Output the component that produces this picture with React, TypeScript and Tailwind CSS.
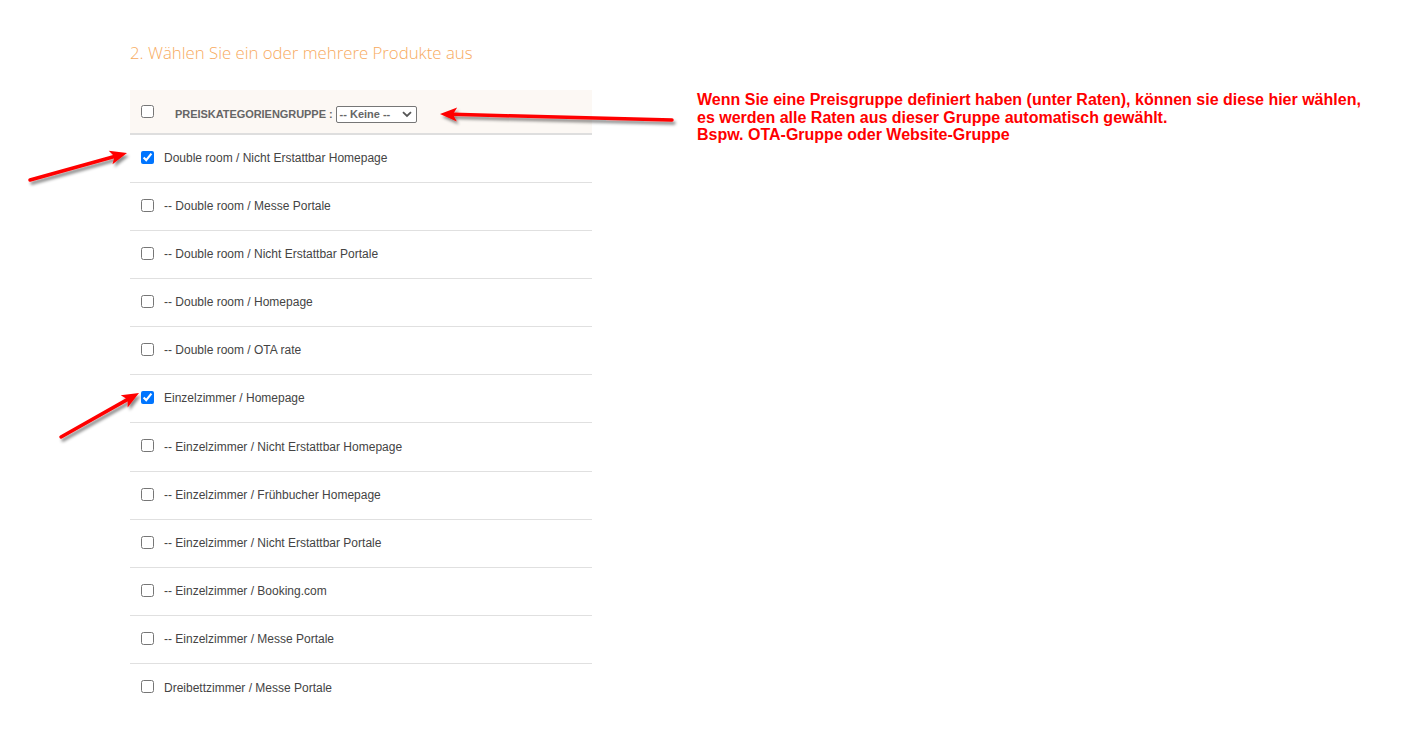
import React from "react";

type Product = {
  label: string;
  checked?: boolean;
};

const products: Product[] = [
  { label: "Double room / Nicht Erstattbar Homepage", checked: true },
  { label: "-- Double room / Messe Portale" },
  { label: "-- Double room / Nicht Erstattbar Portale" },
  { label: "-- Double room / Homepage" },
  { label: "-- Double room / OTA rate" },
  { label: "Einzelzimmer / Homepage", checked: true },
  { label: "-- Einzelzimmer / Nicht Erstattbar Homepage" },
  { label: "-- Einzelzimmer / Frühbucher Homepage" },
  { label: "-- Einzelzimmer / Nicht Erstattbar Portale" },
  { label: "-- Einzelzimmer / Booking.com" },
  { label: "-- Einzelzimmer / Messe Portale" },
  { label: "Dreibettzimmer / Messe Portale" },
];

// red annotation arrows drawn over the screenshot
function Arrow({ x1, y1, x2, y2 }: { x1: number; y1: number; x2: number; y2: number }) {
  const ang = Math.atan2(y2 - y1, x2 - x1);
  const len = 17;
  const w = 7;
  const bx = x2 - Math.cos(ang) * len;
  const by = y2 - Math.sin(ang) * len;
  const px = -Math.sin(ang) * w;
  const py = Math.cos(ang) * w;
  const nx = x2 - Math.cos(ang) * (len - 4);
  const ny = y2 - Math.sin(ang) * (len - 4);
  return (
    <g filter="url(#shadow)">
      <line x1={x1} y1={y1} x2={nx} y2={ny} stroke="#ff0000" strokeWidth={3.5} strokeLinecap="round" />
      <polygon
        points={`${x2},${y2} ${bx + px},${by + py} ${nx},${ny} ${bx - px},${by - py}`}
        fill="#ff0000"
      />
    </g>
  );
}

export default function App() {
  return (
    <div className="relative w-[1408px] h-[740px] bg-white overflow-hidden font-['Liberation_Sans',Arial,sans-serif]">
      <div className="flex gap-[105px] pt-[41px] pl-[130px]">
        <div className="w-[462px] flex flex-col">
          <h2 className="font-['Open_Sans',sans-serif] font-light text-[16.8px] leading-[22px] text-[#f7aa5e] h-[22px] mt-[1px] -mb-[1px]">
            2. Wählen Sie ein oder mehrere Produkte aus
          </h2>

          <div className="mt-[27px] flex flex-col">
            <div className="h-[43px] bg-[#fcf8f4] border-b-2 border-[#dedede] flex items-center pl-[11px] box-content">
              <input type="checkbox" className="w-[13px] h-[13px] m-0 -mt-[1px]" readOnly />
              <span className="ml-[21px] mt-[5px] text-[11px] font-bold text-[#666] tracking-[-0.05px]">
                PREISKATEGORIENGRUPPE :
              </span>
              <div className="ml-[3px] mt-[5px] h-[17px] w-[81px] border border-[#767676] rounded-[2px] bg-white flex items-center justify-between pl-[3px] pr-[4px]">
                <span className="text-[11px] font-bold text-[#666] leading-none">-- Keine --</span>
                <svg width="10" height="7" viewBox="0 0 10 7">
                  <path d="M1 1.2 L5 5 L9 1.2" fill="none" stroke="#555" strokeWidth="1.8" />
                </svg>
              </div>
            </div>

            {products.map((p, i) => (
              <div
                key={i}
                className={
                  i === products.length - 1
                    ? "h-[48px] flex items-center pl-[11px]"
                    : i === 6
                    ? "h-[49px] border-b border-[#e0e0e0] flex items-center pl-[11px]"
                    : "h-[48px] border-b border-[#e0e0e0] flex items-center pl-[11px]"
                }
              >
                <input
                  type="checkbox"
                  defaultChecked={p.checked}
                  className="w-[13px] h-[13px] m-0 -mt-[3px] accent-[#0075ff]"
                />
                <span className="ml-[10px] -mt-[1px] text-[12px] text-[#444]">{p.label}</span>
              </div>
            ))}
          </div>
        </div>

        <div className="pt-[50px] text-[16px] leading-[17.5px] font-bold text-[#ff0000] font-['Liberation_Sans',Arial,sans-serif]">
          <p>Wenn Sie eine Preisgruppe definiert haben (unter Raten), können sie diese hier wählen,</p>
          <p>es werden alle Raten aus dieser Gruppe automatisch gewählt.</p>
          <p>Bspw. OTA-Gruppe oder Website-Gruppe</p>
        </div>
      </div>

      <svg className="absolute inset-0 pointer-events-none" width="1408" height="740">
        <defs>
          <filter id="shadow" x="-20%" y="-50%" width="140%" height="200%">
            <feDropShadow dx="2" dy="3" stdDeviation="1.5" floodColor="#000" floodOpacity="0.45" />
          </filter>
        </defs>
        <Arrow x1={672} y1={120} x2={440} y2={114} />
        <Arrow x1={30} y1={180} x2={127} y2={153} />
        <Arrow x1={61} y1={437} x2={139} y2={393} />
      </svg>
    </div>
  );
}
